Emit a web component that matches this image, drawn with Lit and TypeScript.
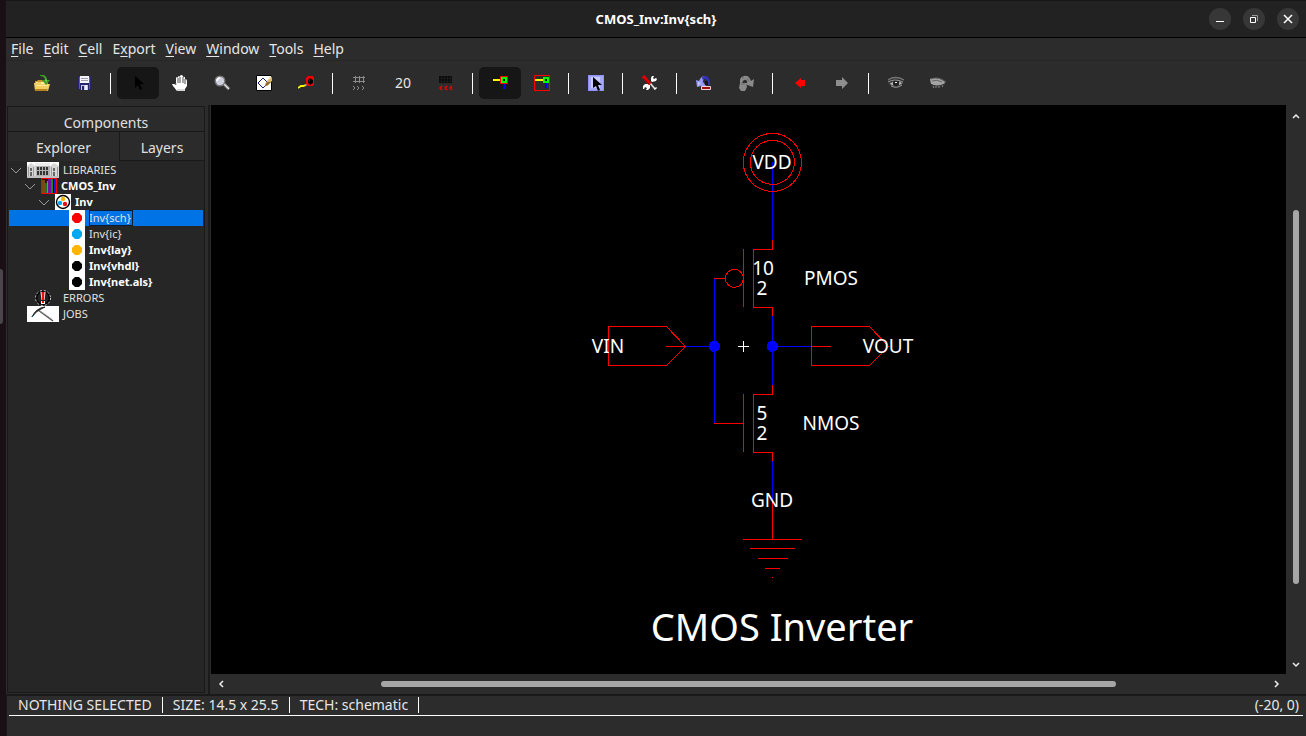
import { LitElement, html, svg, css, TemplateResult } from "lit";
import { customElement, property } from "lit/decorators.js";
import { classMap } from "lit/directives/class-map.js";

/* ---------- icon drawings, 16 x 16 unless noted ---------- */

const art: Record<string, TemplateResult> = {
  open: svg`
    <path d="M1 6h2l1-1h4l1 1h5v3H1z" fill="#c9962a"/>
    <path d="M2 7h11v2H2z" fill="#fff0a8"/>
    <path d="M0 8h3l1-1h3v2h9l-2 7H1z" fill="#f3cf62"/>
    <path d="M1 14h13l-1 2H1z" fill="#b9821c"/>
    <path d="M2 10h12v1H3z" fill="#fce99a"/>
    <path d="M6 0c4-1 7 1 7 5h3l-4 5-4-5h3C11 3 9 1 6 1z" fill="#3e9a24"/>
    <path d="M11 4l1 4 1-3z" fill="#7fd44f"/>`,
  save: svg`
    <path d="M2 1h13v14H3l-1-1z" fill="#26246f"/>
    <path d="M3 2h1v12H3zM13 2h1v12h-1z" fill="#5a58b4"/>
    <path d="M4 1h9v7H4z" fill="#f4f4f8"/>
    <path d="M5 3h7v1H5zM5 5h7v1H5z" fill="#9a9ab0"/>
    <path d="M5 10h7v5H5z" fill="#c4c6e2"/>
    <path d="M6 11h2v4H6z" fill="#26246f"/>
    <path d="M9 10h2v5H9z" fill="#eef"/>`,
  pointer: svg`<path d="M5 1v12l3-3 2 5 2-1-2-5h4z" fill="#000"/>`,
  hand: svg`
    <path d="M4 3q1-2 2 0V2q1-2 2 0V1q1-2 3 0v1q2-1 2 1v1q2 0 2 2v5l-2 3v2H5l-4-5-1-2h2l2 1z" fill="#fff"/>
    <path d="M6 3v5M8 2v6M11 2v6M13 4v5" stroke="#222" fill="none" stroke-width=".8"/>
    <path d="M4 8v2M5 15h8" stroke="#999" fill="none" stroke-width=".8"/>`,
  zoom: svg`
    <path d="M10 9l5 5" stroke="#777" stroke-width="3.2"/>
    <path d="M10 9l5 5" stroke="#e8e8e8" stroke-width="1.3"/>
    <circle cx="6" cy="6" r="4.8" fill="#cfd0dd" stroke="#777" stroke-width="1.4"/>
    <path d="M3 6q0-3 3-3" stroke="#fff" stroke-width="1.6" fill="none"/>`,
  outline: svg`
    <path d="M.5.5h15v15H.5z" fill="#fff" stroke="#000"/>
    <path d="M2 8l5-5 5 5-5 5z" fill="none" stroke="#18187a"/>
    <path d="M14 2l2 1v3l-5 5-2-2z" fill="#d9b566"/>
    <path d="M11 7l-3 5 4-2 3-3z" fill="#8f6a35"/>
    <path d="M14 1l2 1-4 4z" fill="#f6e3b0"/>`,
  measure: svg`
    <path d="M8 3l2-2h5l1 2v7l-2 1H9L8 9z" fill="#f20000"/>
    <path d="M12 3l3 2v3l-3 2-2-2V5z" fill="#000"/>
    <path d="M11 5l2-1-2 3z" fill="#900"/>
    <path d="M8 10L5 11H3l-3 2" stroke="#ff0" stroke-width="1.8" fill="none"/>
    <path d="M8 9l1 1-3 2" stroke="#888" stroke-width=".6" fill="none"/>`,
  grid: svg`
    <path d="M3.500 1v7M7.500 1v7M11.500 1v7M1 2.500h12M1 6.500h12" stroke="#8c8c8c" fill="none"/>
    <path d="M1 11l2 2-2 2M5 11l2 2-2 2M10 11l2 2-2 2" stroke="#8c8c8c" fill="none"/>`,
  gridFine: svg`
    <path d="M1 1h13v7H1z" fill="#0b0b0b"/>
    <path d="M3.500 1v7M6.500 1v7M9.500 1v7M12.500 1v7M1 3.500h13M1 6.500h13" stroke="#2b2b2b" stroke-width=".4"/>
    <path d="M4 11l-2 2 2 2M9 11l-2 2 2 2M14 11l-2 2 2 2" stroke="#f00000" stroke-width="1.400" fill="none"/>`,
  port: svg`
    <path d="M1 4h8v2H1z" fill="#ff0"/>
    <path d="M8 1h8v8H8z" fill="#f00"/>
    <path d="M9 2h6v6H9z" fill="#0f0"/>
    <path d="M11 4h2v2h-2z" fill="#000"/>
    <path d="M11 9h2v5h-2z" fill="#00f"/>`,
  portBox: svg`
    <path d="M.5.5h15v15H.5z" fill="none" stroke="#f00"/>
    <path d="M1 4h8v2H1z" fill="#ff0"/>
    <path d="M9 2h6v6H9z" fill="#0f0"/>
    <path d="M11 4h2v2h-2z" fill="#000"/>
    <path d="M11 8h2v5h-2z" fill="#00f"/>`,
  special: svg`
    <path d="M0 0h16v16H0z" fill="#8f92f4"/>
    <path d="M1 1h14v14H1z" fill="#a5a8f8"/>
    <path d="M3 2h9v11H3z" fill="#c9cbff"/>
    <path d="M5 2v11l3-2 2 5 2-1-2-5h4z" fill="#000"/>`,
  tools: svg`
    <path d="M10 7l4-1 1-2-1-1-2 1-1-1 1-2h-2L9 3v3zM6 9L3 9 1 11v3h1l1-2 2 1-1 2h2l2-2v-3z" fill="#fff"/>
    <path d="M8 8l5 6" stroke="#ddd" stroke-width="1.800"/>
    <path d="M13 13l1 1" stroke="#fff" stroke-width="3"/>
    <path d="M1 1l7 8" stroke="#e00000" stroke-width="3.400"/>
    <path d="M2 4l5 5" stroke="#700" stroke-width=".8"/>`,
  undo: svg`
    <path d="M0 5l3 1Q5 1 9 1l2 2Q7 3 7 7l3 4H5l-4 1z" fill="#9699f0"/>
    <path d="M2 7l3 1-3 3z" fill="#c4c6ff"/>
    <path d="M6 2q6-3 8 4v4h-2q0-5-3-6-2 0-2 2z" fill="#3230b4"/>
    <path d="M9 6q2-1 3 1v3H9z" fill="#161616"/>
    <path d="M5.500 11.500h9v3h-9z" fill="#a00c0c" stroke="#f5d6d6" stroke-linejoin="round"/>`,
  redo: svg`
    <path d="M16 4l-3 2Q11 0 6 1 1 2 2 8l2 1q1-5 4-4 2 1 1 3l-2 0 0 1 8 3z" fill="#8a8a8a"/>
    <path d="M2 8h6l1 4-2 4H3l-2-3z" fill="#8a8a8a"/>
    <path d="M4 3l2-1M9 3l2 3M3 9h4" stroke="#6c6c6c" fill="none"/>`,
  back: svg`<path d="M3 8l6-5v2h4v6H9v2z" fill="#f00"/>`,
  forward: svg`<path d="M14 8L8 2v3H2v6h6v3z" fill="#8e8e8e"/>`,
  eye: svg`
    <path d="M0 5q7-5 16 0" stroke="#777" fill="none" stroke-width="1.300"/>
    <path d="M1 9q6-6 14-1-6 6-14 1z" fill="#bdbdbd" stroke="#444"/>
    <circle cx="8" cy="8" r="3.200" fill="#222"/>
    <path d="M7 7h2v1H7z" fill="#fff"/>
    <path d="M3 11q6 3 11-1M0 7q7-4 15 0" stroke="#999" fill="none"/>`,
  eyeClosed: svg`
    <path d="M0 4q7-3 15 3l-1 3q-6 3-13-1z" fill="#a4a4a4"/>
    <path d="M1 4q8-3 15 3M2 6q5-2 10 1" stroke="#666" fill="none"/>
    <path d="M0 9q6 4 15 0" stroke="#333" fill="none" stroke-width="1.200"/>
    <path d="M3 11l1 2M6 11v2M9 11v2M12 11l1 1" stroke="#888" fill="none"/>`,
  // 32 x 16: library building
  building: svg`
    <path d="M0 0h32v16H0z" fill="#fff"/>
    <path d="M0 4l4-3 4 3h15l4-3 5 3v12H0z" fill="#d8d8d8"/>
    <path d="M8 1h15v3H8z" fill="#ececec"/>
    <path d="M0 14h32v2H0z" fill="#c0c0c0"/>
    <path d="M9 4h14v10H9z" fill="#b0b0b0"/>
    <path d="M10 5h2v3h-2zM13 5h2v3h-2zM16 5h2v3h-2zM19 5h2v3h-2zM10 9h2v4h-2zM13 9h2v4h-2zM16 9h2v4h-2zM19 9h2v4h-2z" fill="#333"/>
    <path d="M3 6h2v3H3zM3 10h2v4H3zM26 6h2v3h-2zM26 10h2v4h-2z" fill="#666"/>
    <path d="M1 5h1v9H1zM6 5h1v9H6zM24 5h1v9h-1zM30 5h1v9h-1z" fill="#999"/>`,
  books: svg`
    <path d="M.5.5h15v15H.5z" fill="#301010" stroke="#f00"/>
    <path d="M1 2h3v13H1z" fill="#7a4a12"/><path d="M4 5h2v10H4z" fill="#157a1c"/>
    <path d="M6 3h1v12H6z" fill="#10b0d8"/><path d="M7 1h3v14H7z" fill="#7010a0"/>
    <path d="M10 1h2v14h-2z" fill="#118a20"/><path d="M13 1h2v14h-2z" fill="#1818e0"/>
    <path d="M12 1h1v14h-1z" fill="#000"/>`,
  cell: svg`
    <path d="M0 0h16v16H0z" fill="#fff"/>
    <circle cx="8" cy="8" r="6.500" fill="#fff" stroke="#000" stroke-width="1.400"/>
    <circle cx="8" cy="5" r="2.200" fill="#ffb400"/>
    <circle cx="5" cy="9" r="2.200" fill="#00a8f0"/>
    <circle cx="10" cy="10" r="2.200" fill="#e81010"/>`,
  error: svg`
    <circle cx="8" cy="8" r="6.500" fill="#222" stroke="#000" stroke-width="1.600"/>
    <circle cx="8" cy="8" r="7.500" fill="none" stroke="#fff" stroke-width=".8" stroke-dasharray="2 2"/>
    <path d="M5.500 2h5l-1 8h-3zM6 11h4v3H6z" fill="#fff"/>
    <path d="M6.500 2h3l-.5 8H7zM7 11h2v2H7z" fill="#e81010"/>`,
  // 32 x 16: pickaxe
  pick: svg`
    <path d="M0 0h32v16H0z" fill="#fff"/>
    <path d="M11 4l15 11" stroke="#555" stroke-width="1.500"/>
    <path d="M12 4l13 9" stroke="#aaa" stroke-width=".6"/>
    <path d="M18 1Q9 2 5 11 9 5 14 3z" fill="#222" stroke="#222"/>
    <path d="M5 11l1-2" stroke="#2a6a70"/>`,
};

const dot = (color: string) => svg`
  <path d="M0 0h16v16H0z" fill="#fff"/>
  <path d="M6 3h4l3 3v4l-3 3H6l-3-3V6z" fill=${color}/>`;

const icon = (drawing: TemplateResult, wide = false) => html`<svg
  class="icon" width=${wide ? 32 : 16} height="16"
  viewBox=${wide ? "0 0 32 16" : "0 0 16 16"} aria-hidden="true">${drawing}</svg>`;

const iconStyles = css`
  .icon { display: block; flex: none; }
`;

const controlStyles = css`
  :host, * { box-sizing: border-box; }
  button {
    margin: 0; padding: 0; border: 0; background: none;
    color: inherit; font: inherit; cursor: default;
  }
`;

/* ---------- title bar ---------- */

@customElement("title-bar")
class TitleBar extends LitElement {
  @property() heading = "";

  static styles = [controlStyles, css`
    :host {
      display: grid; grid-template-columns: 1fr auto 1fr; align-items: center;
      height: 38px; background: #222; border-top: 1px solid #161616;
      border-bottom: 1px solid #000; padding: 0 7px;
    }
    h1 { grid-column: 2; margin: 0; font-size: 13px; font-weight: 700; color: #fff; }
    .controls { display: flex; justify-content: flex-end; gap: 12px; }
    .control {
      width: 22px; height: 22px; border-radius: 50%; background: #373737;
      display: grid; place-items: center;
    }
    .control svg { display: block; }
  `];

  render() {
    return html`
      <h1>${this.heading}</h1>
      <div class="controls">
        <button class="control" aria-label="Minimize">
          <svg width="10" height="10"><path d="M1 7.500h8" stroke="#fff"/></svg>
        </button>
        <button class="control" aria-label="Restore">
          <svg width="10" height="10"><path d="M1.500 3.500h5v5h-5z" fill="none" stroke="#fff"/><path d="M3 1.500h5.500V7" fill="none" stroke="#999"/></svg>
        </button>
        <button class="control" aria-label="Close">
          <svg width="10" height="10"><path d="M1 1l8 8M9 1L1 9" stroke="#fff" stroke-width="1.500"/></svg>
        </button>
      </div>`;
  }
}

/* ---------- menu bar ---------- */

@customElement("menu-bar")
class MenuBar extends LitElement {
  // Each entry: text before the mnemonic, the mnemonic, text after it.
  private menus = [
    ["", "F", "ile"], ["", "E", "dit"], ["", "C", "ell"], ["E", "x", "port"],
    ["", "V", "iew"], ["", "W", "indow"], ["", "T", "ools"], ["", "H", "elp"],
  ];

  static styles = [controlStyles, css`
    :host {
      display: flex; gap: 10px; padding: 0 5px; height: 23px; align-items: center;
      border-bottom: 1px solid #272727; font-size: 14px; line-height: 20px; color: #e6e6e6;
    }
    .key { text-decoration: underline; text-underline-offset: 2px; text-decoration-skip-ink: none; }
  `];

  render() {
    return this.menus.map(([a, key, b]) => html`<button>${a}<u class="key">${key}</u>${b}</button>`);
  }
}

/* ---------- tool bar ---------- */

type Tool = { name: string; art?: string; text?: string; on?: boolean } | null;

@customElement("tool-bar")
class ToolBar extends LitElement {
  private tools: Tool[] = [
    { name: "Open library", art: "open" }, { name: "Save library", art: "save" }, null,
    { name: "Click/zoom/wire", art: "pointer", on: true }, { name: "Pan", art: "hand" },
    { name: "Zoom", art: "zoom" }, { name: "Outline", art: "outline" }, { name: "Measure", art: "measure" }, null,
    { name: "Coarser grid", art: "grid" }, { name: "Grid alignment", text: "20" }, { name: "Finer grid", art: "gridFine" }, null,
    { name: "Select objects", art: "port", on: true }, { name: "Select area", art: "portBox" }, null,
    { name: "Special select", art: "special" }, null,
    { name: "Preferences", art: "tools" }, null,
    { name: "Undo", art: "undo" }, { name: "Redo", art: "redo" }, null,
    { name: "Go back", art: "back" }, { name: "Go forward", art: "forward" }, null,
    { name: "Expand cells", art: "eye" }, { name: "Unexpand cells", art: "eyeClosed" },
  ];

  static styles = [controlStyles, iconStyles, css`
    :host { display: flex; align-items: center; height: 44px; padding: 0 15px; }
    .tool {
      width: 42px; height: 32px; border-radius: 5px;
      display: grid; place-items: center; font-size: 14px; line-height: 18px; color: #e6e6e6;
    }
    .tool.on { background: #161616; }
    .tool.text { width: 44px; }
    .divider { width: 1px; height: 21px; margin: 0 6px 0 5px; background: #fff; }
  `];

  render() {
    return this.tools.map((t) => t === null
      ? html`<span class="divider"></span>`
      : html`<button class=${classMap({ tool: true, on: !!t.on, text: !!t.text })} aria-label=${t.name}>
          ${t.art ? icon(art[t.art]) : t.text}</button>`);
  }
}

/* ---------- explorer ---------- */

interface Row {
  label: string; level: number; open?: boolean; bold?: boolean;
  selected?: boolean; art?: string; wide?: boolean; color?: string; slot?: boolean;
}

@customElement("explorer-panel")
class ExplorerPanel extends LitElement {
  private rows: Row[] = [
    { label: "LIBRARIES", level: 0, open: true, art: "building", wide: true },
    { label: "CMOS_Inv", level: 1, open: true, bold: true, art: "books" },
    { label: "Inv", level: 2, open: true, bold: true, art: "cell" },
    { label: "Inv{sch}", level: 3, color: "#f00", selected: true },
    { label: "Inv{ic}", level: 3, color: "#00a8f0" },
    { label: "Inv{lay}", level: 3, color: "#ffb400", bold: true },
    { label: "Inv{vhdl}", level: 3, color: "#000", bold: true },
    { label: "Inv{net.als}", level: 3, color: "#000", bold: true },
    { label: "ERRORS", level: 0, art: "error", slot: true },
    { label: "JOBS", level: 0, art: "pick", wide: true },
  ];

  static styles = [controlStyles, iconStyles, css`
    :host {
      display: flex; flex-direction: column; border: 1px solid #191919;
      background: #262626; color: #e0e0e0;
    }
    .tabs { display: grid; grid-template-columns: 111px 1fr; font-size: 14px; line-height: 20px; background: #2b2b2b; }
    .tab { height: 29px; border-bottom: 1px solid #191919; padding-top: 4px; }
    .tab.top { grid-column: 1 / -1; height: 25px; padding-top: 6px; }
    .tab.active { border-bottom: 0; padding-top: 2px; background: #2b2b2b; }
    .tab.side { border-left: 1px solid #191919; }
    .tree { margin: 1px 1px 0; padding: 0; list-style: none; font-size: 11px; line-height: 16px; }
    .row { display: flex; align-items: center; height: 16px; gap: 4px; }
    .row.selected { background: #0073e6; }
    .level1 { padding-left: 14px; }
    .level2 { padding-left: 28px; }
    .level3 { padding-left: 42px; }
    .twist { width: 14px; height: 16px; display: block; flex: none; }
    .pic { display: flex; justify-content: center; }
    .pic.slot { width: 32px; }
    .bold { font-weight: 700; color: #fff; }
    .selected .name { outline: 1px solid #0b1c30; outline-offset: -1px; padding-right: 2px; }
  `];

  render() {
    return html`
      <div class="tabs" role="tablist">
        <button class="tab top" role="tab">Components</button>
        <button class="tab active" role="tab" aria-selected="true">Explorer</button>
        <button class="tab side" role="tab">Layers</button>
      </div>
      <ul class="tree" role="tree">
        ${this.rows.map((r) => html`
          <li role="treeitem" class=${classMap({ row: true, selected: !!r.selected, ["level" + r.level]: true })}>
            <svg class="twist" viewBox="0 0 14 16">
              ${r.open ? svg`<path d="M2 6l5 5 5-5" fill="none" stroke="#9a9a9a"/>` : null}
            </svg>
            <span class=${classMap({ pic: true, slot: !!r.slot })}>
              ${icon(r.color ? dot(r.color) : art[r.art!], r.wide)}
            </span>
            <span class=${classMap({ name: true, bold: !!r.bold })}>${r.label}</span>
          </li>`)}
      </ul>`;
  }
}

/* ---------- scroll bar ---------- */

@customElement("scroll-bar")
class ScrollBar extends LitElement {
  @property({ type: Boolean, reflect: true }) vertical = false;
  @property({ type: Array }) parts = [1, 1, 1];

  static styles = [controlStyles, css`
    :host { display: flex; height: 20px; min-width: 0; }
    :host([vertical]) { flex-direction: column; height: auto; width: 20px; min-height: 0; }
    .arrow { width: 20px; height: 20px; flex: none; display: grid; place-items: center; }
    .track { flex: 1; display: flex; align-items: center; min-height: 0; }
    :host([vertical]) .track { flex-direction: column; }
    .part { flex-basis: 0; }
    .thumb { height: 6px; border-radius: 3px; background: #a6a6a6; }
    :host([vertical]) .thumb { height: auto; width: 6px; }
  `];

  private arrow(label: string, d: string) {
    return html`<button class="arrow" aria-label=${label}>
      <svg width="8" height="8"><path d=${d} fill="none" stroke="#eee" stroke-width="1.500"/></svg>
    </button>`;
  }

  render() {
    const [before, thumb, after] = this.parts;
    return html`
      ${this.vertical ? this.arrow("Scroll up", "M1 7l3-3 3 3") : this.arrow("Scroll left", "M6 1L3 4l3 3")}
      <div class="track">
        <span class="part" style="flex-grow:${before}"></span>
        <span class="part thumb" style="flex-grow:${thumb}"></span>
        <span class="part" style="flex-grow:${after}"></span>
      </div>
      ${this.vertical ? this.arrow("Scroll down", "M1 3l3 3 3-3") : this.arrow("Scroll right", "M3 1l3 3-3 3")}`;
  }
}

/* ---------- schematic, origin at the cell centre ---------- */

@customElement("schematic-view")
class SchematicView extends LitElement {
  private texts: [string, number, number][] = [
    ["VDD", 29, -177], ["10", 20, -71], ["2", 19, -51], ["PMOS", 88, -61],
    ["VIN", -135, 7], ["VOUT", 145, 7], ["5", 19, 74], ["2", 19, 94],
    ["NMOS", 88, 84], ["GND", 29, 161],
  ];

  static styles = css`
    :host { display: block; background: #000; min-width: 0; min-height: 0; overflow: hidden; }
    .sheet { display: block; width: 100%; height: 100%; }
    .red { stroke: #f00; fill: none; }
    .blue { stroke: #00f; fill: none; }
    .join { fill: #00f; }
    .origin { stroke: #fff; }
    .label { fill: #fff; font-size: 19px; text-anchor: middle; }
    .caption { fill: #fff; font-size: 38px; text-anchor: middle; }
  `;

  render() {
    return html`
      <svg class="sheet" viewBox="-532 -241 1075 569" role="img" aria-label="CMOS inverter schematic">
        <g transform="translate(.4 .4)" shape-rendering="crispEdges">
          <path class="blue" d="M29-184V-106M-29-68V77M29-30V39M-58 0H-29M29 0H68M29 115V154"/>
          <circle class="red" cx="29" cy="-184" r="29"/>
          <circle class="red" cx="29" cy="-184" r="22"/>
          <circle class="red" cx="-9" cy="-68" r="9"/>
          <path class="red" d="M29-106V-97H10V-39H29V-30M0-97V-39M-29-68H-18"/>
          <path class="red" d="M29 39V48H10V106H29V115M0 48V106M-29 77H0"/>
          <path class="red" d="M-135-20H-77L-58 0-77 19H-135ZM-77 0H-58"/>
          <path class="red" d="M68-20H126L145 0 126 19H68ZM68 0H88"/>
          <path class="red" d="M29 154V193M0 193H59M7 202H52M15 212H45M22 222H37M29 231H30"/>
          <circle class="join" cx="-29" cy="0" r="5.500"/>
          <circle class="join" cx="29" cy="0" r="5.500"/>
          <path class="origin" d="M-5 0H6M0-5V6"/>
        </g>
        ${this.texts.map(([t, x, y]) => svg`<text class="label" x=${x} y=${y}>${t}</text>`)}
        <text class="caption" x="39" y="295">CMOS Inverter</text>
      </svg>`;
  }
}

/* ---------- status bar ---------- */

@customElement("status-bar")
class StatusBar extends LitElement {
  private fields = ["NOTHING SELECTED", "SIZE: 14.5 x 25.5", "TECH: schematic"];

  static styles = [controlStyles, css`
    :host {
      display: block; height: 42px; border-top: 2px solid #191919;
      border-left: 1px solid #191919; padding: 0 3px 0 2px; font-size: 14px; color: #e6e6e6;
    }
    .line { display: flex; align-items: center; height: 20px; border-bottom: 1px solid #fff; line-height: 16px; }
    .field { padding: 0 10px 0 9px; border-right: 1px solid #fff; white-space: nowrap; }
    .field + .field { padding-left: 10px; }
    .line { padding-bottom: 1px; }
    .where { margin-left: auto; padding-right: 4px; }
  `];

  render() {
    return html`<div class="line">
      ${this.fields.map((f) => html`<span class="field">${f}</span>`)}
      <span class="where">(-20, 0)</span>
    </div>`;
  }
}

/* ---------- application ---------- */

@customElement("app-root")
class AppRoot extends LitElement {
  static styles = css`
    :host {
      display: grid; grid-template-columns: 6px minmax(0, 1fr); height: 100vh;
      background: #2c2c2c; font-family: "Noto Sans", "Open Sans", sans-serif;
    }
    .dock { background: #1b0f16; display: flex; align-items: center; }
    .handle { width: 3px; height: 55px; margin-bottom: 144px; border-radius: 0 3px 3px 0; background: #4a454a; }
    .window { display: flex; flex-direction: column; min-width: 0; min-height: 0; }
    .work { flex: 1; min-height: 0; display: grid; grid-template-columns: 199px minmax(0, 1fr); }
    explorer-panel { margin: 1px 0 1px 1px; }
    .editor {
      display: grid; grid-template-columns: minmax(0, 1fr) 20px; grid-template-rows: minmax(0, 1fr) 20px;
      margin-left: 3px; border-left: 2px solid #1b1b1b; padding-left: 1px;
    }
  `;

  render() {
    return html`
      <div class="dock"><span class="handle"></span></div>
      <div class="window">
        <title-bar heading="CMOS_Inv:Inv{sch}"></title-bar>
        <menu-bar></menu-bar>
        <tool-bar></tool-bar>
        <main class="work">
          <explorer-panel></explorer-panel>
          <section class="editor">
            <schematic-view></schematic-view>
            <scroll-bar vertical .parts=${[85, 374, 70]}></scroll-bar>
            <scroll-bar .parts=${[150, 735, 150]}></scroll-bar>
          </section>
        </main>
        <status-bar></status-bar>
      </div>`;
  }
}
